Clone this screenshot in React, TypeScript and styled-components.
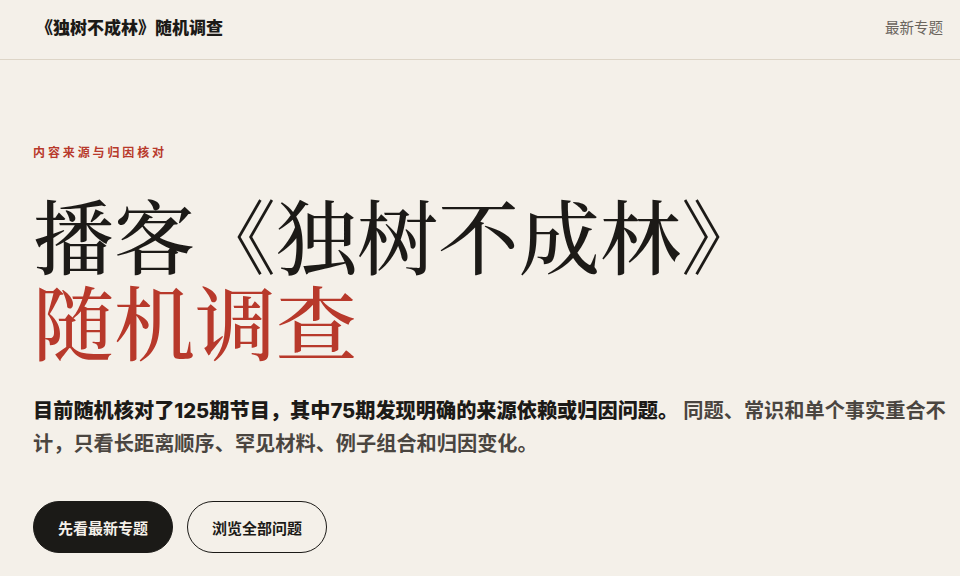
import React from 'react';
import styled, { createGlobalStyle } from 'styled-components';

const GlobalStyle = createGlobalStyle`
	html, body {
		margin: 0;
		padding: 0;
		background: #f4f0e9;
	}
	body {
		font-family: Inter, "Noto Sans CJK SC", sans-serif;
		color: #1c1a17;
	}
`;

const Header = styled.header`
	height: 60px;
	box-sizing: border-box;
	border-bottom: 1px solid #ddd5c7;
	display: flex;
	align-items: center;
	justify-content: space-between;
	padding: 0 17px 0 36px;
`;

const Brand = styled.div`
	font-size: 17px;
	font-weight: 800;
	color: #1c1a17;
	margin-top: -6px;
`;

const NavLink = styled.a`
	font-size: 14.5px;
	color: #6b655e;
	text-decoration: none;
	margin-top: -6px;
`;

const Hero = styled.main`
	padding: 83px 10px 0 33px;
`;

const Eyebrow = styled.div`
	font-size: 12px;
	font-weight: 700;
	letter-spacing: 0.24em;
	color: #b8392b;
`;

const Headline = styled.h1`
	margin: 30px 0 0;
	font-family: "Noto Serif CJK SC", "Songti SC", "Liberation Serif", serif;
	font-weight: 500;
	font-size: 81px;
	line-height: 86px;
	color: #1c1a17;
`;

const Accent = styled.span`
	display: block;
	color: #b8392b;
`;

const Lead = styled.p`
	margin: 32px 0 0;
	font-size: 20.2px;
	line-height: 33px;
	font-weight: 600;
	color: #4a4540;
`;

const Strong = styled.strong`
	font-weight: 800;
	color: #1c1a17;
`;

const Actions = styled.div`
	display: flex;
	gap: 14px;
	margin-top: 41px;
`;

const Button = styled.a<{ $primary?: boolean }>`
	display: inline-flex;
	align-items: center;
	justify-content: center;
	width: 140px;
	height: 52px;
	box-sizing: border-box;
	border-radius: 26px;
	font-size: 15px;
	font-weight: 700;
	text-decoration: none;
	background: ${(p) => (p.$primary ? '#1b1a17' : 'transparent')};
	color: ${(p) => (p.$primary ? '#f4f0e9' : '#1c1a17')};
	border: 1.5px solid #1b1a17;
`;

export default function App() {
	return (
		<>
			<GlobalStyle />
			<Header>
				<Brand>《独树不成林》随机调查</Brand>
				<NavLink href="#">最新专题</NavLink>
			</Header>
			<Hero>
				<Eyebrow>内容来源与归因核对</Eyebrow>
				<Headline>
					播客《独树不成林》
					<Accent>随机调查</Accent>
				</Headline>
				<Lead>
					<Strong>目前随机核对了125期节目，其中75期发现明确的来源依赖或归因问题。</Strong>{' '}
					同题、常识和单个事实重合不计，只看长距离顺序、罕见材料、例子组合和归因变化。
				</Lead>
				<Actions>
					<Button $primary href="#">先看最新专题</Button>
					<Button href="#">浏览全部问题</Button>
				</Actions>
			</Hero>
		</>
	);
}
